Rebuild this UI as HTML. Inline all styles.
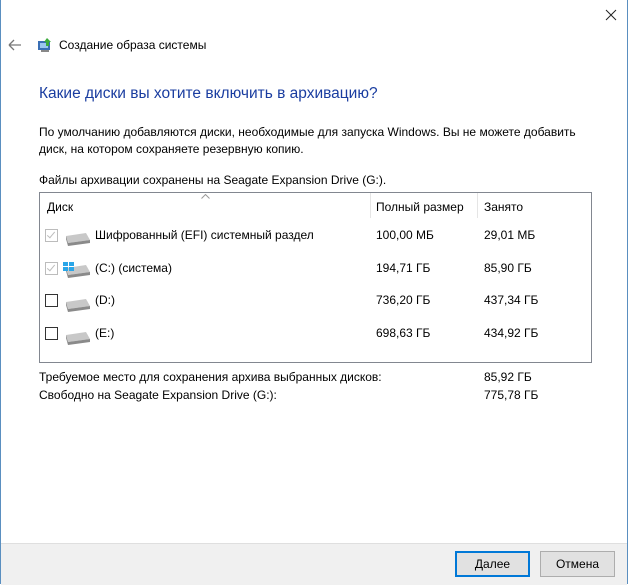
<!DOCTYPE html>
<html><head><meta charset="utf-8"><style>
body{margin:0;width:628px;height:585px;background:#fff;font-family:"Segoe UI","Liberation Sans",sans-serif;font-size:12px;color:#000;position:relative;overflow:hidden}
.win{position:absolute;left:0;top:0;width:626px;height:583px;border:1px solid #5a8fc0;border-top:none}
.a{position:absolute;white-space:nowrap}
.foot{position:absolute;left:1px;top:543px;width:626px;height:41px;background:#f0f0f0;border-top:1px solid #dfdfdf}
.btn{position:absolute;top:551px;height:24px;width:73px;border:1px solid #adadad;background:#e1e1e1;text-align:center;line-height:24px}
.tbl{position:absolute;left:39px;top:192px;width:551px;height:169px;border:1px solid #828790}
.cb{position:absolute;width:11px;height:11px;border:1px solid #333;background:#fff}
.cb.d{border-color:#bcbcbc}
.cb.d:after{content:"";position:absolute;left:3px;top:0px;width:3px;height:7px;border:solid #bcbcbc;border-width:0 1px 1px 0;transform:rotate(40deg)}
</style></head><body>
<div class="win"></div>
<svg class="a" style="left:605px;top:9px" width="12" height="12"><path d="M1 1L11 11M11 1L1 11" stroke="#222" stroke-width="1"/></svg>
<svg class="a" style="left:8px;top:39px" width="14" height="12"><path d="M1 6H13M1 6L6 1M1 6L6 11" stroke="#777" stroke-width="1.3" fill="none"/></svg>
<svg class="a" style="left:37px;top:37px" width="17" height="16"><rect x="1" y="4" width="12" height="9" fill="#3a6fb5"/><rect x="3" y="6" width="8" height="5" fill="#9cc7ef"/><rect x="4" y="13" width="8" height="2" fill="#888"/><path d="M10 1 L14 5 L12 5 L12 9 L9 9 L9 5 L7 5Z" fill="#3cab3c"/></svg>
<div class="a" style="left:59px;top:38px;font-size:12px">Создание образа системы</div>
<div class="a" style="left:39px;top:85px;font-size:15.5px;color:#1a3da0">Какие диски вы хотите включить в архивацию?</div>
<div class="a" style="left:39px;top:125px">По умолчанию добавляются диски, необходимые для запуска Windows. Вы не можете добавить</div>
<div class="a" style="left:39px;top:142px">диск, на котором сохраняете резервную копию.</div>
<div class="a" style="left:39px;top:173px">Файлы архивации сохранены на Seagate Expansion Drive (G:).</div>
<div class="tbl">
 <div class="a" style="left:330px;top:0;width:1px;height:25px;background:#e5e5e5"></div>
 <div class="a" style="left:437px;top:0;width:1px;height:25px;background:#e5e5e5"></div>
 <svg class="a" style="left:161px;top:1px" width="9" height="5"><path d="M0.5 4.5L4.5 0.5L8.5 4.5" stroke="#999" fill="none"/></svg>
 <div class="a" style="left:7px;top:7px">Диск</div>
 <div class="a" style="left:336px;top:7px">Полный размер</div>
 <div class="a" style="left:444px;top:7px">Занято</div>
</div>
<div class="cb d" style="left:45px;top:229px"></div>
<div class="cb d" style="left:45px;top:262px"></div>
<div class="cb" style="left:45px;top:294px"></div>
<div class="cb" style="left:45px;top:327px"></div>
<svg class="a" style="left:62px;top:230px" width="30" height="16"><path d="M4 6 L24 3 L28 10 L6 13Z" fill="#c8c8c8"/><path d="M4 6 L6 13 L28 10 L28 13 L6 16 L4 9Z" fill="#8a8a8a"/></svg>
<svg class="a" style="left:62px;top:262px" width="30" height="16"><path d="M4 6 L24 3 L28 10 L6 13Z" fill="#c8c8c8"/><path d="M4 6 L6 13 L28 10 L28 13 L6 16 L4 9Z" fill="#8a8a8a"/><rect x="1" y="0" width="5" height="4" fill="#2aa6e8"/><rect x="7" y="0" width="5" height="4" fill="#2aa6e8"/><rect x="1" y="5" width="5" height="4" fill="#2aa6e8"/><rect x="7" y="5" width="5" height="4" fill="#2aa6e8"/></svg>
<svg class="a" style="left:62px;top:296px" width="30" height="16"><path d="M4 6 L24 3 L28 10 L6 13Z" fill="#c8c8c8"/><path d="M4 6 L6 13 L28 10 L28 13 L6 16 L4 9Z" fill="#8a8a8a"/></svg>
<svg class="a" style="left:62px;top:329px" width="30" height="16"><path d="M4 6 L24 3 L28 10 L6 13Z" fill="#c8c8c8"/><path d="M4 6 L6 13 L28 10 L28 13 L6 16 L4 9Z" fill="#8a8a8a"/></svg>
<div class="a" style="left:95px;top:228px">Шифрованный (EFI) системный раздел</div>
<div class="a" style="left:95px;top:261px">(C:) (система)</div>
<div class="a" style="left:95px;top:293px">(D:)</div>
<div class="a" style="left:95px;top:326px">(E:)</div>
<div class="a" style="left:376px;top:228px">100,00 МБ</div>
<div class="a" style="left:376px;top:261px">194,71 ГБ</div>
<div class="a" style="left:376px;top:293px">736,20 ГБ</div>
<div class="a" style="left:376px;top:326px">698,63 ГБ</div>
<div class="a" style="left:484px;top:228px">29,01 МБ</div>
<div class="a" style="left:484px;top:261px">85,90 ГБ</div>
<div class="a" style="left:484px;top:293px">437,34 ГБ</div>
<div class="a" style="left:484px;top:326px">434,92 ГБ</div>
<div class="a" style="left:39px;top:370px">Требуемое место для сохранения архива выбранных дисков:</div>
<div class="a" style="left:39px;top:388px">Свободно на Seagate Expansion Drive (G:):</div>
<div class="a" style="left:484px;top:370px">85,92 ГБ</div>
<div class="a" style="left:484px;top:388px">775,78 ГБ</div>
<div class="foot"></div>
<div class="btn" style="left:455px;border:2px solid #0078d7;width:71px;height:22px;line-height:22px">Далее</div>
<div class="btn" style="left:540px">Отмена</div>
</body></html>
